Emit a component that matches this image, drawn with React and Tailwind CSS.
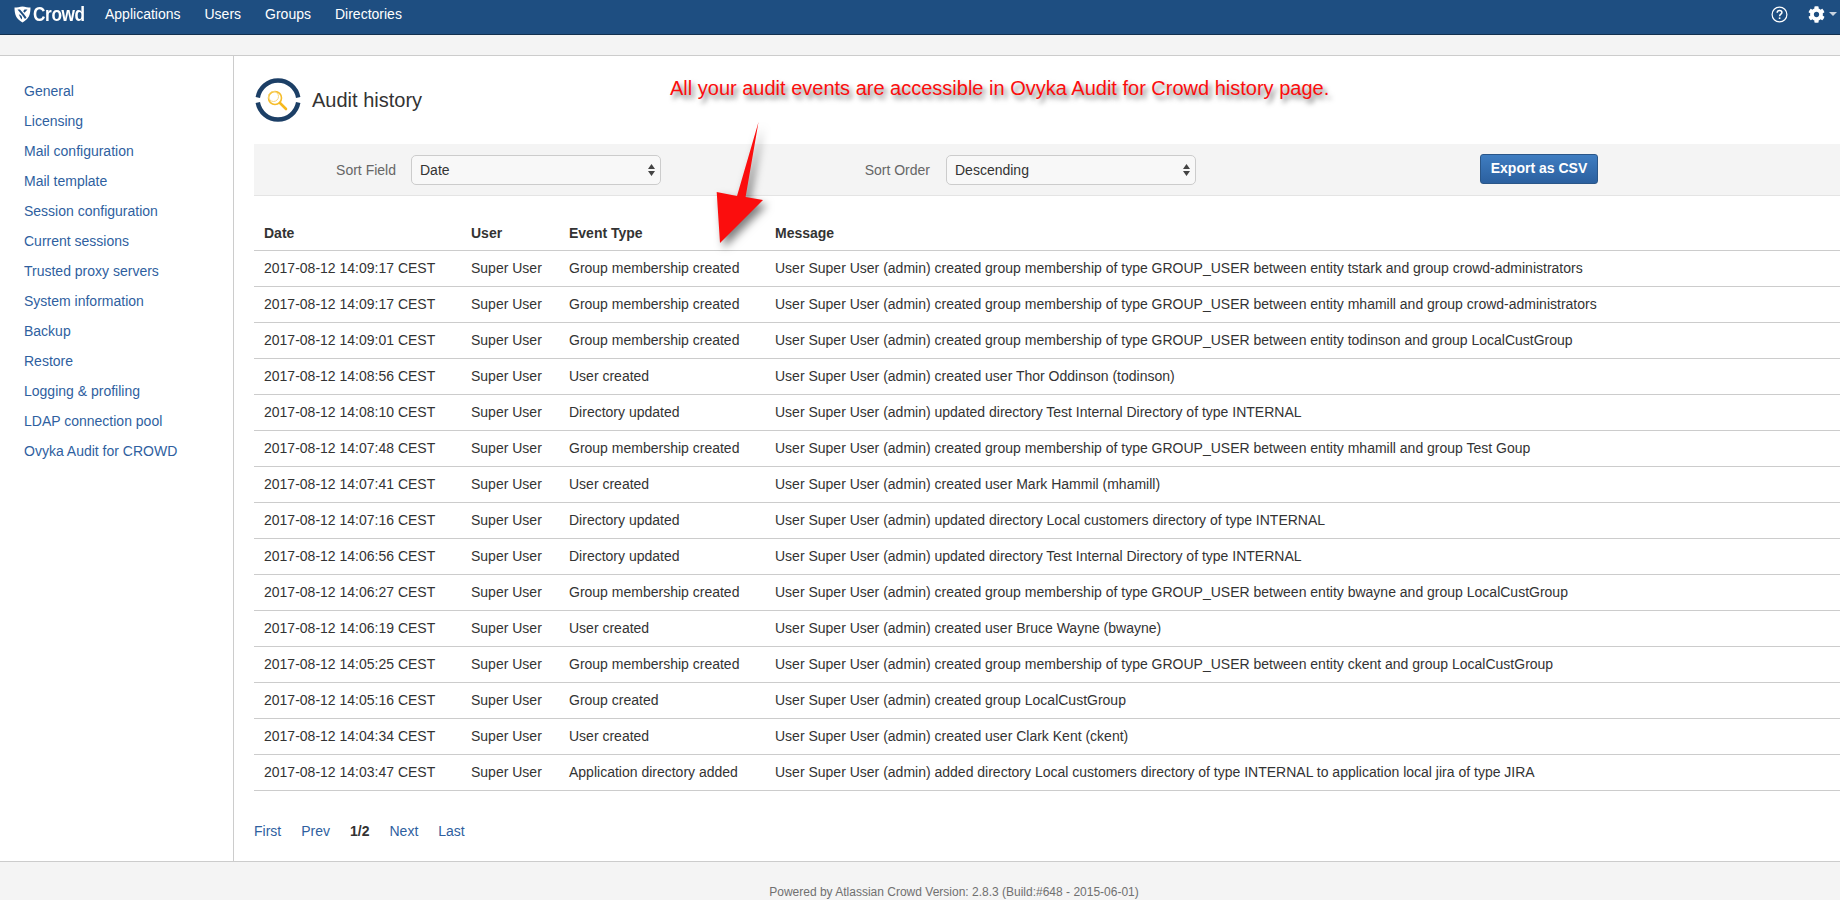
import React from 'react';
import { FaCog } from 'react-icons/fa';

const sideLinks = [
  'General',
  'Licensing',
  'Mail configuration',
  'Mail template',
  'Session configuration',
  'Current sessions',
  'Trusted proxy servers',
  'System information',
  'Backup',
  'Restore',
  'Logging & profiling',
  'LDAP connection pool',
  'Ovyka Audit for CROWD',
];

const rows = [
  ['2017-08-12 14:09:17 CEST', 'Group membership created', 'User Super User (admin) created group membership of type GROUP_USER between entity tstark and group crowd-administrators'],
  ['2017-08-12 14:09:17 CEST', 'Group membership created', 'User Super User (admin) created group membership of type GROUP_USER between entity mhamill and group crowd-administrators'],
  ['2017-08-12 14:09:01 CEST', 'Group membership created', 'User Super User (admin) created group membership of type GROUP_USER between entity todinson and group LocalCustGroup'],
  ['2017-08-12 14:08:56 CEST', 'User created', 'User Super User (admin) created user Thor Oddinson (todinson)'],
  ['2017-08-12 14:08:10 CEST', 'Directory updated', 'User Super User (admin) updated directory Test Internal Directory of type INTERNAL'],
  ['2017-08-12 14:07:48 CEST', 'Group membership created', 'User Super User (admin) created group membership of type GROUP_USER between entity mhamill and group Test Goup'],
  ['2017-08-12 14:07:41 CEST', 'User created', 'User Super User (admin) created user Mark Hammil (mhamill)'],
  ['2017-08-12 14:07:16 CEST', 'Directory updated', 'User Super User (admin) updated directory Local customers directory of type INTERNAL'],
  ['2017-08-12 14:06:56 CEST', 'Directory updated', 'User Super User (admin) updated directory Test Internal Directory of type INTERNAL'],
  ['2017-08-12 14:06:27 CEST', 'Group membership created', 'User Super User (admin) created group membership of type GROUP_USER between entity bwayne and group LocalCustGroup'],
  ['2017-08-12 14:06:19 CEST', 'User created', 'User Super User (admin) created user Bruce Wayne (bwayne)'],
  ['2017-08-12 14:05:25 CEST', 'Group membership created', 'User Super User (admin) created group membership of type GROUP_USER between entity ckent and group LocalCustGroup'],
  ['2017-08-12 14:05:16 CEST', 'Group created', 'User Super User (admin) created group LocalCustGroup'],
  ['2017-08-12 14:04:34 CEST', 'User created', 'User Super User (admin) created user Clark Kent (ckent)'],
  ['2017-08-12 14:03:47 CEST', 'Application directory added', 'User Super User (admin) added directory Local customers directory of type INTERNAL to application local jira of type JIRA'],
];

const CrowdShield = () => (
  <svg width="17" height="17" viewBox="0 0 17 17">
    <path d="M0.5 1.5 C3 1.5 6 1 8.5 0.5 C11 1 14 1.5 16.5 1.5 C16.5 8 15 13 8.5 16.5 C2 13 0.5 8 0.5 1.5Z" fill="#fff" />
    <path d="M3.5 3.5 L8.5 9.5 L11 13 L12.5 11.5 L9.5 7.5 L6 3.5Z M13.5 3.5 L10.5 3.5 L9.2 5.2 L10.5 6.8Z M7 9.5 L4.8 8.2 L6.5 12 L8 13.5 L8 11Z" fill="#1f4f82" />
  </svg>
);

const AuditIcon = () => (
  <svg width="46" height="46" viewBox="0 0 46 46" fill="none">
    <path d="M2.8 20.5 A20.5 20.5 0 0 1 43.2 20.5" stroke="#1c3f66" strokeWidth="4.5" />
    <path d="M2.8 25.5 A20.5 20.5 0 0 0 43.2 25.5" stroke="#1c3f66" strokeWidth="4.5" />
    <circle cx="20" cy="21" r="6.5" stroke="#f6bd2a" strokeWidth="1.6" />
    <circle cx="18.5" cy="19.5" r="5" stroke="#f9d77a" strokeWidth="1" />
    <path d="M25 26 L31 32" stroke="#f6b91c" strokeWidth="2.6" strokeLinecap="round" />
  </svg>
);

const SelectBox = ({ value, options }) => (
  <div className="relative h-[30px] w-[250px]">
    <select
      defaultValue={value}
      className="h-full w-full appearance-none rounded-[5px] border border-[#cccccc] bg-[#f8f8f8] pb-0 pl-[8px] pr-6 pt-[2px] text-[14px] text-[#333333] outline-none"
    >
      {options.map((o) => (
        <option key={o}>{o}</option>
      ))}
    </select>
    <svg className="absolute right-[6px] top-[9px]" width="7" height="12" viewBox="0 0 7 12" fill="#444444">
      <path d="M3.5 0 L7 5 L0 5Z M0 7 L7 7 L3.5 12Z" />
    </svg>
  </div>
);

export default function App() {
  return (
    <div className="relative flex h-[900px] flex-col overflow-hidden bg-white font-['Liberation_Sans',Arial,sans-serif] text-[14px] text-[#333333]">
      {/* top bar */}
      <header className="flex h-[35px] shrink-0 items-center border-b border-[#12304f] bg-[#1e4e81] pb-[6px] text-white">
        <div className="ml-[14px] flex w-[91px] items-center gap-[2px]">
          <CrowdShield />
          <span className="origin-left scale-x-[0.86] text-[20px] font-bold leading-none tracking-[-0.4px]">Crowd</span>
        </div>
        <nav className="flex gap-6">
          <a>Applications</a>
          <a>Users</a>
          <a>Groups</a>
          <a>Directories</a>
        </nav>
        <div className="ml-auto mr-[3px] flex items-center">
          <svg className="mr-[20px]" width="17" height="17" viewBox="0 0 17 17" fill="none" stroke="#fff">
            <circle cx="8.5" cy="8.5" r="7.4" strokeWidth="1.2" />
            <path d="M6.2 6.7 C6.2 5.3 7.2 4.5 8.6 4.5 C10 4.5 10.9 5.3 10.9 6.5 C10.9 8.2 8.6 8.2 8.6 10.2" strokeWidth="1.5" />
            <path d="M8.6 11.4 V13" strokeWidth="1.6" />
          </svg>
          <FaCog className="text-[17px] text-white" />
          <span className="ml-[4px] h-0 w-0 border-x-[4px] border-t-[4px] border-x-transparent border-t-[#c9d4e0]" />
        </div>
      </header>
      <div className="h-[21px] shrink-0 border-b border-[#cccccc] bg-[#f4f4f4]" />

      <div className="flex min-h-0 flex-1">
        {/* sidebar */}
        <aside className="w-[234px] shrink-0 border-r border-[#cccccc] pl-6 pt-5">
          <ul>
            {sideLinks.map((l) => (
              <li key={l} className="h-[30px] leading-[30px] text-[#2f5f9f]">{l}</li>
            ))}
          </ul>
        </aside>

        {/* content */}
        <main className="min-w-0 flex-1 pl-5">
          <div className="ml-px flex h-[88px] items-center gap-[11px]">
            <AuditIcon />
            <h1 className="text-[20px] font-normal text-[#333333]">Audit history</h1>
          </div>

          <div className="flex h-[52px] items-center border-b border-[#e4e4e4] bg-[#f4f4f4]">
            <label className="w-[142px] pt-[2px] text-right text-[#666666]">Sort Field</label>
            <div className="ml-[15px]">
              <SelectBox value="Date" options={['Date', 'User', 'Event Type']} />
            </div>
            <label className="w-[270px] pr-px pt-[2px] text-right text-[#666666]">Sort Order</label>
            <div className="ml-[15px]">
              <SelectBox value="Descending" options={['Descending', 'Ascending']} />
            </div>
            <button className="mb-[2px] ml-[284px] h-[30px] w-[118px] rounded-[3px] border border-[#2a5688] bg-gradient-to-b from-[#3f7dc1] to-[#2b609f] text-[14px] font-bold text-white">
              Export as CSV
            </button>
          </div>

          <table className="w-full table-fixed border-collapse">
            <colgroup>
              <col className="w-[207px]" />
              <col className="w-[98px]" />
              <col className="w-[206px]" />
              <col />
            </colgroup>
            <thead>
              <tr className="h-[54px] border-b border-[#cccccc] font-bold">
                <th className="px-[10px] pb-[6px] align-bottom text-left">Date</th>
                <th className="px-[10px] pb-[6px] align-bottom text-left">User</th>
                <th className="px-[10px] pb-[6px] align-bottom text-left">Event Type</th>
                <th className="px-[10px] pb-[6px] align-bottom text-left">Message</th>
              </tr>
            </thead>
            <tbody>
              {rows.map((r, i) => (
                <tr key={i} className="h-[36px] border-b border-[#cccccc]">
                  <td className="whitespace-nowrap px-[10px]">{r[0]}</td>
                  <td className="whitespace-nowrap px-[10px]">Super User</td>
                  <td className="whitespace-nowrap px-[10px]">{r[1]}</td>
                  <td className="whitespace-nowrap px-[10px]">{r[2]}</td>
                </tr>
              ))}
            </tbody>
          </table>

          <div className="mt-[30px] flex gap-5 leading-5 text-[#2f5f9f]">
            <a>First</a>
            <a>Prev</a>
            <b className="text-[#333333]">1/2</b>
            <a>Next</a>
            <a>Last</a>
          </div>
        </main>
      </div>

      <footer className="flex h-[39px] shrink-0 justify-center border-t border-[#cccccc] bg-[#f4f4f4] pl-[68px] pt-[22px] text-[12px] leading-[16px] text-[#707070]">
        Powered by Atlassian Crowd Version: 2.8.3 (Build:#648 - 2015-06-01)
      </footer>

      {/* red annotation pasted over the page */}
      <div className="absolute left-[670px] top-[76px] whitespace-nowrap text-[20px] leading-6 text-[#fb0d0d] [text-shadow:3px_4px_5px_rgba(0,0,0,0.55)]">
        All your audit events are accessible in Ovyka Audit for Crowd history page.
      </div>
      <svg className="absolute left-[700px] top-[110px] drop-shadow-[4px_5px_4px_rgba(0,0,0,0.5)]" width="80" height="150" viewBox="700 110 80 150">
        <path d="M758.5 122 L745.6 197 L763 200 L720 243 L716.7 192 L737 196Z" fill="#fb0d0d" />
      </svg>
    </div>
  );
}
